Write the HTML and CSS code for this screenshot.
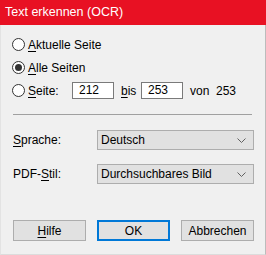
FILE: index.html
```html
<!DOCTYPE html>
<html lang="de">
<head>
<meta charset="UTF-8" />
<title>Text erkennen (OCR)</title>
<link rel="stylesheet" href="styles.css">
</head>
<body>

<div class="window">
  <div class="titlebar">Text erkennen (OCR)</div>

  <div class="content">
    <!-- Seitenbereich -->
    <div class="radio-row">
      <span class="radio"></span>
      <span><u>A</u>ktuelle Seite</span>
    </div>
    <div class="radio-row">
      <span class="radio checked"></span>
      <span><u>A</u>lle Seiten</span>
    </div>
    <div class="radio-row">
      <span class="radio"></span>
      <span class="range-label"><u>S</u>eite:</span>
      <span class="field">212</span>
      <span class="bis"><u>b</u>is</span>
      <span class="field">253</span>
      <span class="von">von&nbsp;&nbsp;253</span>
    </div>

    <div class="separator"></div>

    <!-- Optionen -->
    <div class="option-row">
      <span class="option-label"><u>S</u>prache:</span>
      <div class="select">
        <span>Deutsch</span>
        <svg width="9" height="5" viewBox="0 0 9 5"><path d="M0.5 0.5 L4.5 4.5 L8.5 0.5" fill="none" stroke="#606060" stroke-width="1"/></svg>
      </div>
    </div>
    <div class="option-row">
      <span class="option-label">PDF-<u>S</u>til:</span>
      <div class="select">
        <span>Durchsuchbares Bild</span>
        <svg width="9" height="5" viewBox="0 0 9 5"><path d="M0.5 0.5 L4.5 4.5 L8.5 0.5" fill="none" stroke="#606060" stroke-width="1"/></svg>
      </div>
    </div>

    <div class="buttons">
      <button class="btn"><u>H</u>ilfe</button>
      <button class="btn default">OK</button>
      <button class="btn">Abbrechen</button>
    </div>
  </div>
</div>

</body>
</html>
```

FILE: styles.css
```css
body {
  margin: 0;
  font-family: "Liberation Sans", Arial, sans-serif;
  font-size: 12px;
  color: #000;
  background: #f0f0f0;
}
u {
  text-decoration-thickness: 1px;
  text-underline-offset: 2px;
}
.window {
  width: 266px;
  height: 255px;
  box-sizing: border-box;
}
/* Titelleiste */
.titlebar {
  height: 25px;
  line-height: 24px;
  padding-left: 5px;
  background: #e81123;
  color: #fff;
  font-size: 12.5px;
}
.content {
  height: 230px;
  box-sizing: border-box;
  padding: 8px 11px 0 11px;
  border-left: 1px solid #e3e3e3;
  border-right: 1px solid #bcbcbc;
  border-bottom: 1px solid #dcdcdc;
}
/* Radio-Buttons */
.radio-row {
  display: flex;
  align-items: center;
  height: 23px;
}
.radio {
  width: 11px;
  height: 11px;
  border: 1px solid #333;
  border-radius: 50%;
  background: #fff;
  margin-right: 3px;
  position: relative;
  flex-shrink: 0;
}
.radio.checked::after {
  content: "";
  position: absolute;
  left: 2px;
  top: 2px;
  width: 7px;
  height: 7px;
  border-radius: 50%;
  background: #333;
}
.range-label {
  width: 44px;
}
.field {
  width: 34px;
  height: 15px;
  line-height: 15px;
  border: 1px solid #7a7a7a;
  background: #fff;
  padding-left: 6px;
}
.bis {
  width: 20px;
  padding-left: 7px;
}
.von {
  padding-left: 7px;
}
.separator {
  height: 1px;
  width: 239px;
  background: #a0a0a0;
  margin: 12px 0 15px 1px;
}
/* Auswahlfelder */
.option-row {
  display: flex;
  align-items: center;
  margin-bottom: 14px;
}
.option-label {
  width: 84px;
  padding-left: 1px;
}
.select {
  flex: 1;
  height: 18px;
  border: 1px solid #adadad;
  background: #e1e1e1;
  display: flex;
  align-items: center;
  justify-content: space-between;
  padding: 0 7px 0 3px;
}
/* Schaltflaechen */
.buttons {
  display: flex;
  gap: 11px;
  margin-top: 36px;
  padding-left: 1px;
}
.btn {
  width: 73px;
  height: 21px;
  box-sizing: border-box;
  border: 1px solid #adadad;
  background: #e1e1e1;
  font-family: inherit;
  font-size: 12px;
  color: #000;
  padding: 0;
}
.btn.default {
  border: 2px solid #0078d7;
}
```
